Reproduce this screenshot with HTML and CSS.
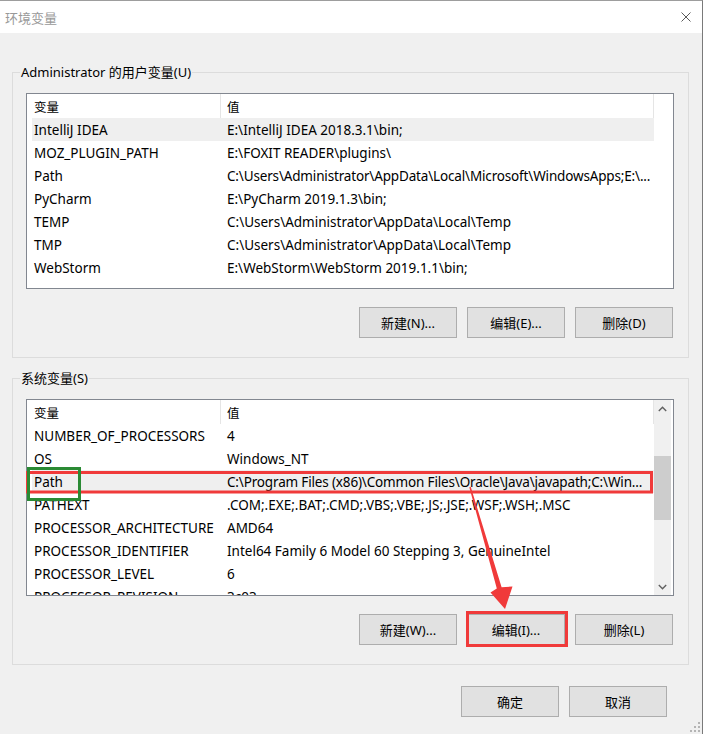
FILE: index.html
```html
<!DOCTYPE html>
<html lang="zh-CN">
<head>
<meta charset="utf-8">
<title>环境变量</title>
<link rel="stylesheet" href="styles.css">
</head>
<body>
<div class="window">
  <div class="titlebar">
    <span class="title">环境变量</span>
    <svg class="close" width="10" height="10" viewBox="0 0 10 10"><path d="M0.5 0.5 L9.5 9.5 M9.5 0.5 L0.5 9.5" stroke="#5a5a5a" stroke-width="1" fill="none"/></svg>
  </div>
  <div class="content">
    <fieldset class="group">
      <legend>Administrator 的用户变量(U)</legend>
      <div class="list">
        <div class="list-main">
          <div class="header"><div class="hcell c1">变量</div><div class="hcell c2">值</div></div>
          <div class="row sel"><div class="c1">IntelliJ IDEA</div><div class="c2">E:\IntelliJ IDEA 2018.3.1\bin;</div></div>
          <div class="row"><div class="c1">MOZ_PLUGIN_PATH</div><div class="c2">E:\FOXIT READER\plugins\</div></div>
          <div class="row"><div class="c1">Path</div><div class="c2 fit">C:\Users\Administrator\AppData\Local\Microsoft\WindowsApps;E:\...</div></div>
          <div class="row"><div class="c1">PyCharm</div><div class="c2">E:\PyCharm 2019.1.3\bin;</div></div>
          <div class="row"><div class="c1">TEMP</div><div class="c2">C:\Users\Administrator\AppData\Local\Temp</div></div>
          <div class="row"><div class="c1">TMP</div><div class="c2">C:\Users\Administrator\AppData\Local\Temp</div></div>
          <div class="row"><div class="c1">WebStorm</div><div class="c2">E:\WebStorm\WebStorm 2019.1.1\bin;</div></div>
        </div>
      </div>
      <div class="btns">
        <button class="btn">新建(N)...</button>
        <button class="btn">编辑(E)...</button>
        <button class="btn">删除(D)</button>
      </div>
    </fieldset>

    <fieldset class="group sysgroup">
      <legend>系统变量(S)</legend>
      <div class="list sys">
        <div class="list-main">
          <div class="header"><div class="hcell c1">变量</div><div class="hcell c2">值</div></div>
          <div class="row"><div class="c1">NUMBER_OF_PROCESSORS</div><div class="c2">4</div></div>
          <div class="row"><div class="c1">OS</div><div class="c2">Windows_NT</div></div>
          <div class="row sel"><div class="c1">Path</div><div class="c2 fit">C:\Program Files (x86)\Common Files\Oracle\Java\javapath;C:\Win...</div></div>
          <div class="row"><div class="c1">PATHEXT</div><div class="c2">.COM;.EXE;.BAT;.CMD;.VBS;.VBE;.JS;.JSE;.WSF;.WSH;.MSC</div></div>
          <div class="row"><div class="c1">PROCESSOR_ARCHITECTURE</div><div class="c2">AMD64</div></div>
          <div class="row"><div class="c1">PROCESSOR_IDENTIFIER</div><div class="c2">Intel64 Family 6 Model 60 Stepping 3, GenuineIntel</div></div>
          <div class="row"><div class="c1">PROCESSOR_LEVEL</div><div class="c2">6</div></div>
          <div class="row"><div class="c1">PROCESSOR_REVISION</div><div class="c2">3c03</div></div>
        </div>
        <div class="scrollbar">
          <div class="sb-btn"><svg width="9" height="6" viewBox="0 0 9 6"><path d="M0.8 5 L4.5 1.3 L8.2 5" stroke="#606060" stroke-width="1.4" fill="none"/></svg></div>
          <div class="sb-track"><div class="sb-thumb"></div></div>
          <div class="sb-btn"><svg width="9" height="6" viewBox="0 0 9 6"><path d="M0.8 1 L4.5 4.7 L8.2 1" stroke="#606060" stroke-width="1.4" fill="none"/></svg></div>
        </div>
      </div>
      <div class="btns">
        <button class="btn">新建(W)...</button>
        <button class="btn">编辑(I)...</button>
        <button class="btn">删除(L)</button>
      </div>
    </fieldset>

    <div class="footer">
      <button class="btn">确定</button>
      <button class="btn">取消</button>
    </div>
  </div>
  <svg class="grip" width="11" height="11" viewBox="0 0 11 11">
    <g fill="#b4b4b4">
      <rect x="9" y="1" width="2" height="2"/>
      <rect x="5" y="5" width="2" height="2"/><rect x="9" y="5" width="2" height="2"/>
      <rect x="1" y="9" width="2" height="2"/><rect x="5" y="9" width="2" height="2"/><rect x="9" y="9" width="2" height="2"/>
    </g>
  </svg>
</div>

<svg class="annot" width="703" height="734" viewBox="0 0 703 734">
  <rect x="27.5" y="472.5" width="624" height="19.5" fill="none" stroke="#f03a3a" stroke-width="3"/>
  <rect x="28.5" y="468.5" width="51" height="31" fill="none" stroke="#2a8a34" stroke-width="3"/>
  <rect x="467.5" y="612.5" width="99" height="33" fill="none" stroke="#f03a3a" stroke-width="3"/>
  <polygon points="469.3,487.2 496.8,588.4 490.5,592.5 505,609 512.5,586.5 501.6,587.2 470.7,486.8" fill="#f03a3a"/>
</svg>
</body>
</html>
```

FILE: styles.css
```css
html, body {
  margin: 0;
  padding: 0;
}

body {
  position: relative;
  width: 703px;
  height: 734px;
  overflow: hidden;
  font-family: "Noto Sans", "Noto Sans CJK SC", sans-serif;
  font-size: 12.5px;
  color: #000;
  background: #f0f0f0;
}

.window {
  position: relative;
  width: 703px;
  height: 734px;
  box-sizing: border-box;
  border-top: 1px solid #9d9d9d;
  border-right: 1px solid #7a7a7a;
  background: #f0f0f0;
  display: flex;
  flex-direction: column;
}

.titlebar {
  height: 32px;
  flex: none;
  background: #fff;
  display: flex;
  align-items: center;
  justify-content: space-between;
  padding: 0 11px 0 5px;
}

.title {
  font-size: 13px;
  color: #999;
}

.close {
  display: block;
}

.content {
  padding: 0 13px 0 12px;
}

.group {
  margin: 30px 0 0;
  padding: 12px 14px 19px 13px;
  border: 1px solid #dcdcdc;
  min-width: 0;
}

.sysgroup {
  margin-top: 11px;
}

.group legend {
  padding: 0 1px;
  margin-left: -6px;
  line-height: 18px;
  font-size: 13px;
}

.list {
  height: 196px;
  box-sizing: border-box;
  border: 1px solid #828790;
  background: #fff;
  display: flex;
  overflow: hidden;
}

.list.sys {
  height: 197px;
}

.list-main {
  padding-left: 5px;
  width: 622px;
  flex: none;
}

.header {
  display: grid;
  grid-template-columns: 189px 433px;
  height: 24px;
}

.hcell {
  border-right: 1px solid #e5e5e5;
  display: flex;
  align-items: center;
}

.row {
  display: grid;
  grid-template-columns: 189px 433px;
  height: 23px;
  align-items: center;
  font-size: 13.5px;
  line-height: 18px;
}

.row.sel {
  background: #efefef;
}

.c1, .c2 {
  white-space: nowrap;
  overflow: hidden;
}

.c1 {
  padding-left: 2px;
}

.c2 {
  padding-left: 6px;
}

.c2.fit {
  letter-spacing: -0.16px;
}

.scrollbar {
  width: 17px;
  flex: none;
  background: #f0f0f0;
  display: flex;
  flex-direction: column;
}

.sb-btn {
  height: 17px;
  flex: none;
  display: flex;
  align-items: center;
  justify-content: center;
}

.sb-btn svg {
  display: block;
}

.sb-track {
  flex: 1;
}

.sb-thumb {
  margin-top: 39px;
  height: 64px;
  background: #cdcdcd;
}

.btns {
  display: flex;
  justify-content: flex-end;
  gap: 10px;
  margin-top: 18px;
  padding-right: 1px;
}

.btn {
  width: 98px;
  height: 31px;
  box-sizing: border-box;
  border: 1px solid #adadad;
  background: #e1e1e1;
  font-family: inherit;
  font-size: 13px;
  color: #000;
  padding: 0;
  margin: 0;
}

.footer {
  display: flex;
  justify-content: flex-end;
  gap: 10px;
  margin-top: 21px;
  padding-right: 22px;
}

.grip {
  position: absolute;
  right: 2px;
  bottom: 2px;
}

.annot {
  position: absolute;
  left: 0;
  top: 0;
  pointer-events: none;
}
```
